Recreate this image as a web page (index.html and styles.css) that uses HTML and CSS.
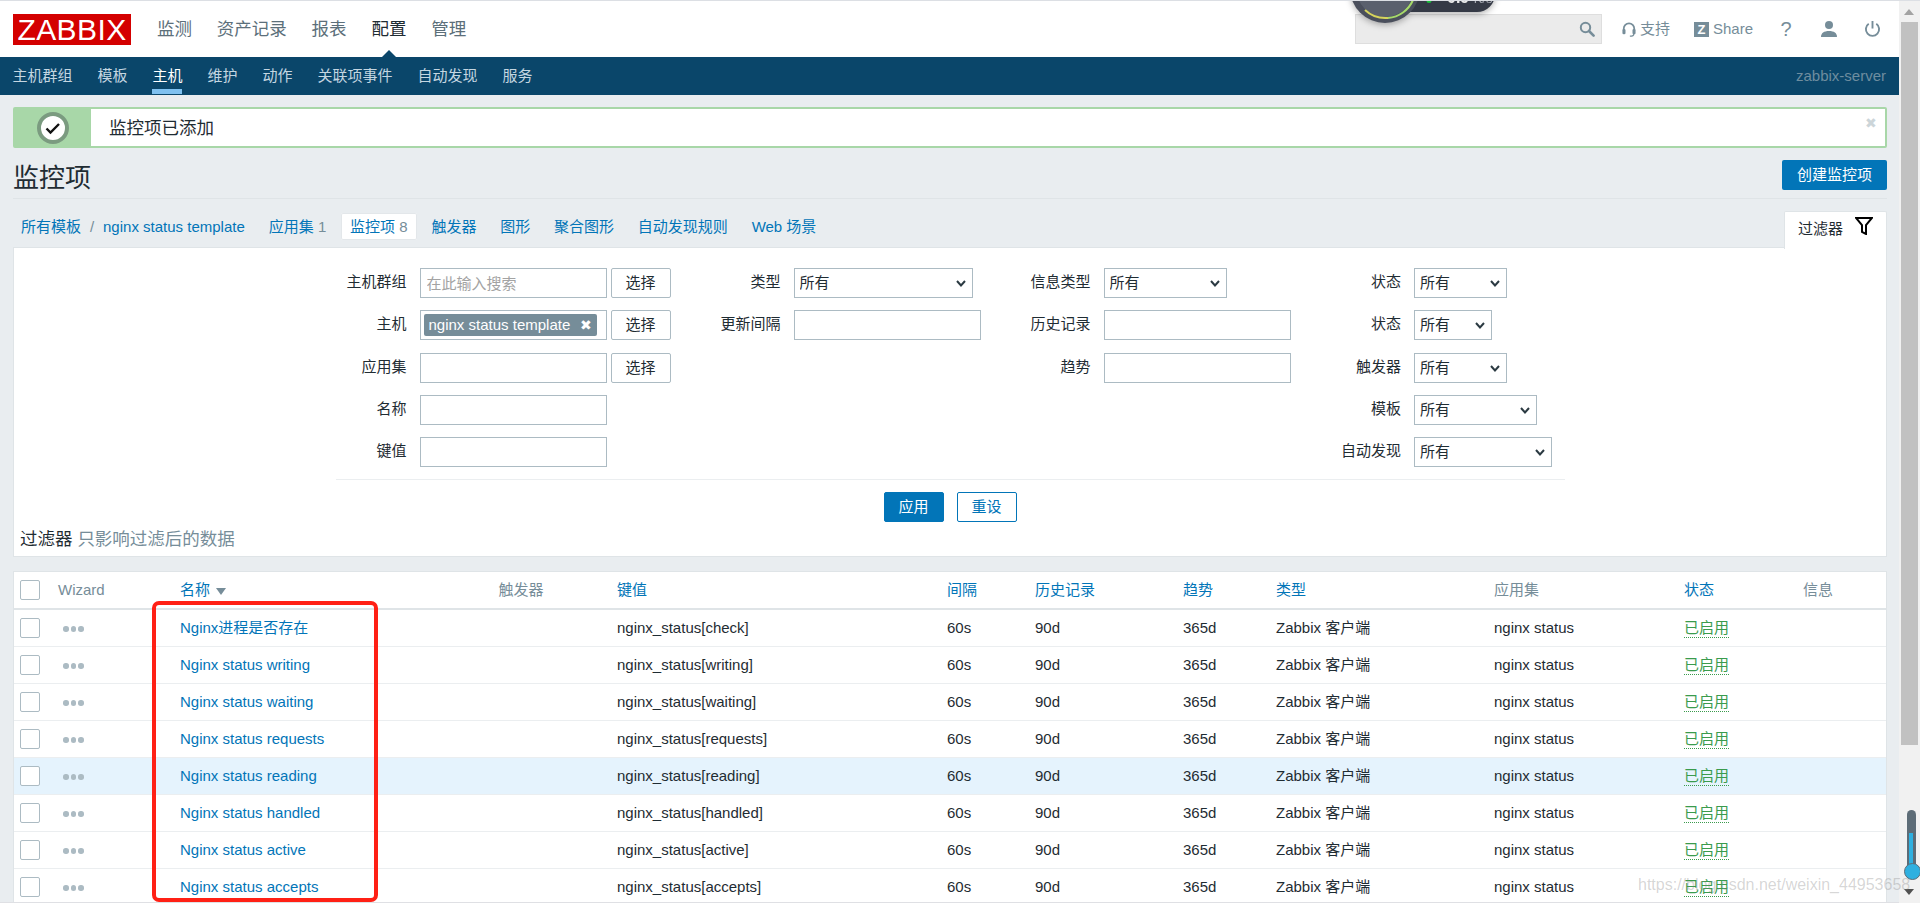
FILE: index.html
```html
<!DOCTYPE html>
<html lang="zh-CN">
<head>
<meta charset="utf-8">
<title>监控项</title>
<link rel="stylesheet" href="styles.css">
</head>
<body>
<div class="page">
  <header class="top">
    <div class="logo">ZABBIX</div>
    <nav class="menu">
      <a>监测</a><a>资产记录</a><a>报表</a><a class="on">配置</a><a>管理</a>
    </nav>
    <div class="search">
      <input class="search-input" type="text" aria-label="搜索">
      <svg class="search-icon" viewBox="0 0 16 16" width="16" height="16"><circle cx="6.5" cy="6.5" r="4.7" fill="none" stroke="#768d99" stroke-width="2"/><path d="M10 10l4.6 4.6" stroke="#768d99" stroke-width="2.6" stroke-linecap="round"/></svg>
    </div>
    <a class="tool support"><svg viewBox="0 0 16 18" width="14" height="17"><path d="M2 10V8a6 6 0 0 1 12 0v2" fill="none" stroke="#768d99" stroke-width="2"/><rect x="0.5" y="8.500" width="3.500" height="6" rx="1.500" fill="#768d99"/><rect x="12" y="8.500" width="3.500" height="6" rx="1.500" fill="#768d99"/><path d="M13.500 14c0 2-2 2.500-4.500 2.500" fill="none" stroke="#768d99" stroke-width="1.500"/></svg>支持</a>
    <a class="tool share"><span class="zbox">Z</span>Share</a>
    <a class="ico help">?</a>
    <a class="ico"><svg viewBox="0 0 18 18" width="18" height="18"><circle cx="9" cy="5" r="4" fill="#768d99"/><path d="M1 17c0-4 3-6 8-6s8 2 8 6z" fill="#768d99"/></svg></a>
    <a class="ico"><svg viewBox="0 0 18 18" width="17" height="18"><path d="M5 3.500a7 7 0 1 0 8 0" fill="none" stroke="#768d99" stroke-width="2"/><path d="M9 0.500v8" stroke="#768d99" stroke-width="2"/></svg></a>
  </header>
  <nav class="sub">
    <a>主机群组</a><a>模板</a><a class="on">主机</a><a>维护</a><a>动作</a><a>关联项事件</a><a>自动发现</a><a>服务</a>
    <span class="server">zabbix-server</span>
  </nav>
  <main class="content">
    <div class="message">
      <div class="message-icon">
        <svg viewBox="0 0 32 32" width="32" height="32"><circle cx="16" cy="16" r="14" fill="#fff" stroke="#7b9b80" stroke-width="4"/><path d="M9.500 16.500l4 4 8.500-8.500" fill="none" stroke="#111" stroke-width="2.400"/></svg>
      </div>
      <div class="message-text">监控项已添加</div>
      <span class="message-close">✖</span>
    </div>
    <div class="title-row">
      <h1 class="title">监控项</h1>
      <a class="btn-create">创建监控项</a>
    </div>
    <div class="tabs-row">
      <div class="crumbs"><a>所有模板</a><span class="slash">/</span><a>nginx status template</a></div>
      <a class="tab">应用集 <span class="count">1</span></a>
      <a class="tab active">监控项 <span class="count">8</span></a>
      <a class="tab">触发器</a>
      <a class="tab">图形</a>
      <a class="tab">聚合图形</a>
      <a class="tab">自动发现规则</a>
      <a class="tab">Web 场景</a>
      <div class="filter-tab">过滤器
        <svg viewBox="0 0 18 18" width="18" height="18"><path d="M1 1h16l-6 7v9l-4-2V8z" fill="#fff" stroke="#000" stroke-width="2"/></svg>
      </div>
    </div>
    <section class="filter">
      <form class="form">
        <div class="col col1">
          <label>主机群组</label><div class="pick"><input class="input" placeholder="在此输入搜索"><button type="button" class="choose">选择</button></div>
          <label>主机</label><div class="pick"><div class="input chipbox"><span class="chip">nginx status template<b class="chip-x">✖</b></span></div><button type="button" class="choose">选择</button></div>
          <label>应用集</label><div class="pick"><input class="input"><button type="button" class="choose">选择</button></div>
          <label>名称</label><div class="pick"><input class="input"></div>
          <label>键值</label><div class="pick"><input class="input"></div>
        </div>
        <div class="col col2">
          <label>类型</label><div class="selwrap w179"><select class="sel"><option>所有</option></select><svg class="chev" viewBox="0 0 10 7" width="10" height="7"><path d="M1 1l4 4.500L9 1" fill="none" stroke="#2b3a42" stroke-width="2"/></svg></div>
          <label>更新间隔</label><div><input class="input"></div>
        </div>
        <div class="col col3">
          <label>信息类型</label><div class="selwrap w123"><select class="sel"><option>所有</option></select><svg class="chev" viewBox="0 0 10 7" width="10" height="7"><path d="M1 1l4 4.500L9 1" fill="none" stroke="#2b3a42" stroke-width="2"/></svg></div>
          <label>历史记录</label><div><input class="input"></div>
          <label>趋势</label><div><input class="input"></div>
        </div>
        <div class="col col4">
          <label>状态</label><div class="selwrap w93"><select class="sel"><option>所有</option></select><svg class="chev" viewBox="0 0 10 7" width="10" height="7"><path d="M1 1l4 4.500L9 1" fill="none" stroke="#2b3a42" stroke-width="2"/></svg></div>
          <label>状态</label><div class="selwrap w78"><select class="sel"><option>所有</option></select><svg class="chev" viewBox="0 0 10 7" width="10" height="7"><path d="M1 1l4 4.500L9 1" fill="none" stroke="#2b3a42" stroke-width="2"/></svg></div>
          <label>触发器</label><div class="selwrap w93"><select class="sel"><option>所有</option></select><svg class="chev" viewBox="0 0 10 7" width="10" height="7"><path d="M1 1l4 4.500L9 1" fill="none" stroke="#2b3a42" stroke-width="2"/></svg></div>
          <label>模板</label><div class="selwrap w123"><select class="sel"><option>所有</option></select><svg class="chev" viewBox="0 0 10 7" width="10" height="7"><path d="M1 1l4 4.500L9 1" fill="none" stroke="#2b3a42" stroke-width="2"/></svg></div>
          <label>自动发现</label><div class="selwrap w138"><select class="sel"><option>所有</option></select><svg class="chev" viewBox="0 0 10 7" width="10" height="7"><path d="M1 1l4 4.500L9 1" fill="none" stroke="#2b3a42" stroke-width="2"/></svg></div>
        </div>
      </form>
      <div class="actions">
        <button type="button" class="apply">应用</button>
        <button type="button" class="reset">重设</button>
      </div>
      <div class="filter-note">过滤器 <span>只影响过滤后的数据</span></div>
    </section>
    <section class="list">
      <table class="grid">
        <colgroup>
          <col class="c-check"><col class="c-wizard"><col class="c-name"><col class="c-trigger"><col class="c-key"><col class="c-interval"><col class="c-history"><col class="c-trends"><col class="c-type"><col class="c-app"><col class="c-status"><col class="c-info">
        </colgroup>
        <thead>
          <tr>
            <th><span class="box"></span></th>
            <th>Wizard</th>
            <th><a>名称</a><i class="sort"></i></th>
            <th>触发器</th>
            <th><a>键值</a></th>
            <th><a>间隔</a></th>
            <th><a>历史记录</a></th>
            <th><a>趋势</a></th>
            <th><a>类型</a></th>
            <th>应用集</th>
            <th><a>状态</a></th>
            <th>信息</th>
          </tr>
        </thead>
        <tbody>
          <tr><td><span class="box"></span></td><td><span class="dots"><i></i><i></i><i></i></span></td><td><a>Nginx进程是否存在</a></td><td></td><td>nginx_status[check]</td><td>60s</td><td>90d</td><td>365d</td><td>Zabbix 客户端</td><td>nginx status</td><td><span class="ok">已启用</span></td><td></td></tr>
          <tr><td><span class="box"></span></td><td><span class="dots"><i></i><i></i><i></i></span></td><td><a>Nginx status writing</a></td><td></td><td>nginx_status[writing]</td><td>60s</td><td>90d</td><td>365d</td><td>Zabbix 客户端</td><td>nginx status</td><td><span class="ok">已启用</span></td><td></td></tr>
          <tr><td><span class="box"></span></td><td><span class="dots"><i></i><i></i><i></i></span></td><td><a>Nginx status waiting</a></td><td></td><td>nginx_status[waiting]</td><td>60s</td><td>90d</td><td>365d</td><td>Zabbix 客户端</td><td>nginx status</td><td><span class="ok">已启用</span></td><td></td></tr>
          <tr><td><span class="box"></span></td><td><span class="dots"><i></i><i></i><i></i></span></td><td><a>Nginx status requests</a></td><td></td><td>nginx_status[requests]</td><td>60s</td><td>90d</td><td>365d</td><td>Zabbix 客户端</td><td>nginx status</td><td><span class="ok">已启用</span></td><td></td></tr>
          <tr class="hover"><td><span class="box"></span></td><td><span class="dots"><i></i><i></i><i></i></span></td><td><a>Nginx status reading</a></td><td></td><td>nginx_status[reading]</td><td>60s</td><td>90d</td><td>365d</td><td>Zabbix 客户端</td><td>nginx status</td><td><span class="ok">已启用</span></td><td></td></tr>
          <tr><td><span class="box"></span></td><td><span class="dots"><i></i><i></i><i></i></span></td><td><a>Nginx status handled</a></td><td></td><td>nginx_status[handled]</td><td>60s</td><td>90d</td><td>365d</td><td>Zabbix 客户端</td><td>nginx status</td><td><span class="ok">已启用</span></td><td></td></tr>
          <tr><td><span class="box"></span></td><td><span class="dots"><i></i><i></i><i></i></span></td><td><a>Nginx status active</a></td><td></td><td>nginx_status[active]</td><td>60s</td><td>90d</td><td>365d</td><td>Zabbix 客户端</td><td>nginx status</td><td><span class="ok">已启用</span></td><td></td></tr>
          <tr><td><span class="box"></span></td><td><span class="dots"><i></i><i></i><i></i></span></td><td><a>Nginx status accepts</a></td><td></td><td>nginx_status[accepts]</td><td>60s</td><td>90d</td><td>365d</td><td>Zabbix 客户端</td><td>nginx status</td><td><span class="ok">已启用</span></td><td></td></tr>
        </tbody>
      </table>
    </section>
  </main>

  <div class="gauge">
    <svg viewBox="0 0 150 60" width="150" height="60"><rect x="30" y="-30" width="115" height="42" rx="18" fill="#353a46"/><circle cx="35" cy="-12" r="35" fill="#4a4f5c"/><circle cx="35" cy="-12" r="29" fill="#5a606d"/><path d="M15 10A30 30 0 0 0 38 18" fill="none" stroke="#d6d45c" stroke-width="2"/><path d="M38 18A30 30 0 0 0 63 0" fill="none" stroke="#a6d96a" stroke-width="2"/><circle cx="79" cy="0.500" r="2.500" fill="#19c23c"/></svg>
    <span class="gauge-text">0.9 <small>K/s</small></span>
  </div>
  <div class="redbox"></div>
  <div class="bottom-line"></div>
</div>
<aside class="scrollbar">
  <span class="arrow up"></span>
  <span class="thumb"></span>
  <span class="thermo"><i></i></span>
  <span class="arrow down"></span>
</aside>
<div class="watermark">https://blog.csdn.net/weixin_44953658</div>
</body>
</html>
```
FILE: styles.css
```css
* { box-sizing: border-box; }
html, body { margin: 0; height: 903px; overflow: hidden; }
body {
  display: flex;
  position: relative;
  font: 15px/20px "Liberation Sans", "Noto Sans CJK SC", sans-serif;
  color: #1f2c33;
  background: #e9edf0;
  border-top: 1px solid #dcdfe4;
}
a { color: #0275b8; text-decoration: none; }
.page { position: relative; width: 1899px; height: 902px; overflow: hidden; flex: none; }

/* header */
.top { display: flex; align-items: center; height: 56px; background: #fff; padding: 0 5.5px 0 13px; }
.logo {
  width: 118px; height: 31px; background: #d40000; color: #fff;
  font-size: 30px; line-height: 31px; text-align: center; letter-spacing: .4px;
}
.menu { display: flex; gap: 24.8px; margin-left: 26px; font-size: 17.500px; line-height: 24px; position: relative; }
.menu a { color: #5c6f7a; position: relative; }
.menu a.on { color: #1f2c33; }
.menu a.on::after {
  content: ""; position: absolute; left: 8px; top: 33px;
  border: solid transparent; border-width: 0 10px 10px; border-bottom-color: #0a466a;
}
.search { display: flex; align-items: center; width: 247px; height: 30px; margin-left: auto; background: #ebebeb; border: 1px solid #dedede; padding-right: 6px; }
.search-input { flex: 1; min-width: 0; height: 100%; border: 0; background: transparent; }
.tool { display: flex; align-items: center; color: #768d99; gap: 4px; }
.support { margin-left: 19.500px; }
.share { margin-left: 24px; margin-right: 11.500px; }
.zbox { width: 15px; height: 15px; background: #768d99; color: #fff; font-size: 13px; font-weight: 700; line-height: 15px; text-align: center; }
.ico { width: 43px; display: flex; justify-content: center; align-items: center; color: #768d99; }
.help { font-size: 20px; }

/* sub nav */
.sub { display: flex; align-items: center; gap: 25px; height: 38px; background: #0a466a; padding: 0 13px 0 12.400px; position: relative; }
.sub a { color: #c4d6e1; position: relative; line-height: 38px; }
.sub a.on { color: #fff; }
.sub a.on::after { content: ""; position: absolute; left: 0; right: 0; bottom: 1px; height: 5px; background: #7fc1f0; }
.server { margin-left: auto; color: #6e8d9f; }

/* content */
.content { padding: 12px 12px 0 13px; }
.message { display: flex; align-items: center; height: 41px; background: #fff; border: 2px solid #a8d7a8; border-radius: 2px; position: relative; }
.message-icon { display: flex; align-items: center; justify-content: center; align-self: stretch; width: 76px; background: #a8d7a8; }
.message-text { margin-left: 18px; font-size: 17.500px; }
.message-close { position: absolute; right: 8px; top: 4px; font-size: 14px; color: #ccd5d9; }
.title-row { display: flex; justify-content: space-between; align-items: flex-start; margin-top: 12px; padding-bottom: 8px; border-bottom: 1px solid #dfe4e7; box-sizing: content-box; height: 30px; }
.title { margin: 0; font-size: 26px; font-weight: 400; line-height: 36px; height: 30px; }
.btn-create { width: 105px; height: 30px; background: #0275b8; color: #fff; border-radius: 2px; line-height: 30px; text-align: center; }

.tabs-row { display: flex; align-items: flex-start; gap: 5.800px; height: 49px; padding-top: 14px; }
.crumbs { display: flex; padding: 4px 0 0 8px; margin-right: 9.200px; line-height: 20px; }
.slash { width: 22px; text-align: center; color: #768d99; }
.tab { height: 27px; padding: 0 9px; line-height: 27px; }
.tab.active { background: #fff; border-radius: 2px; box-shadow: 0 0 0 1px #e3e7ea inset; }
.count { color: #768d99; }
.filter-tab {
  display: flex; align-items: flex-start; gap: 12px; margin-left: auto; margin-top: -2px;
  width: 103px; height: 38px; padding: 7px 0 0 13px;
  background: #fff; border: 1px solid #dfe4e7; border-bottom: 0; border-radius: 2px 2px 0 0;
  position: relative; z-index: 1; color: #1f2c33;
}
.filter-tab svg { margin-top: -2px; }

/* filter */
.filter { height: 310px; background: #fff; border: 1px solid #dfe4e7; padding-top: 20px; margin-top: -1px; }
.form { display: flex; width: 1229px; margin: 0 auto; height: 199px; }
.col { display: grid; grid-auto-rows: 30px; row-gap: 12.25px; column-gap: 13px; align-content: start; }
.col label { text-align: right; line-height: 28px; white-space: nowrap; }
.col1 { width: 334.500px; grid-template-columns: 71px 1fr; }
.col2 { width: 329.500px; grid-template-columns: 110.500px 1fr; }
.col3 { width: 300px; grid-template-columns: 91px 1fr; }
.col4 { width: 264px; grid-template-columns: 101.500px 1fr; }
.pick { display: flex; gap: 4px; }
.input { width: 187px; height: 30px; border: 1px solid #acbbc3; background: #fff; padding: 0 6px; font: inherit; flex: none; }
.input::placeholder { color: #a3a3a3; }
.chipbox { padding: 0 0 0 3px; display: flex; align-items: center; }
.chip { display: flex; align-items: center; justify-content: space-between; width: 173px; height: 22px; padding: 0 5px; background: #768d99; color: #fff; border-radius: 2px; }
.chip-x { font-size: 14px; font-weight: 400; }
.choose { width: 60px; height: 30px; padding: 0; font: inherit; color: #1f2c33; background: #fff; border: 1px solid #acbbc3; border-radius: 2px; }
.selwrap { position: relative; height: 30px; }
.sel { display: block; width: 100%; height: 30px; border: 1px solid #acbbc3; background: #fff; font: inherit; color: #1f2c33; padding-left: 5px; border-radius: 0; appearance: none; }
.chev { position: absolute; right: 7px; top: 12px; pointer-events: none; }
.w179 { width: 179px; }
.w123 { width: 123px; }
.w93 { width: 93px; }
.w78 { width: 78px; }
.w138 { width: 138px; }
.actions { display: flex; justify-content: center; gap: 13px; width: 1229px; margin: 12px auto 0; padding-top: 12px; border-top: 1px solid #ebeef0; }
.apply, .reset { width: 60px; height: 30px; padding: 0; font: inherit; border-radius: 2px; border: 1px solid #0275b8; }
.apply { background: #0275b8; color: #fff; }
.reset { background: #fff; color: #0275b8; }
.filter-note { margin: 7px 0 0 6px; font-size: 17.500px; line-height: 20px; }
.filter-note span { color: #768d99; }

/* list */
.list { margin-top: 14px; background: #fff; border: 1px solid #dfe4e7; border-bottom: 0; }
.grid { width: 1872px; table-layout: fixed; border-collapse: separate; border-spacing: 0; }
.c-check { width: 44px; } .c-wizard { width: 122px; } .c-name { width: 318.500px; } .c-trigger { width: 118.500px; }
.c-key { width: 330px; } .c-interval { width: 88px; } .c-history { width: 148px; } .c-trends { width: 93px; }
.c-type { width: 218px; } .c-app { width: 190px; } .c-status { width: 119px; } .c-info { width: 83px; }
.grid th { height: 38px; padding: 0 0 1px; text-align: left; font-weight: 400; color: #768d99; border-bottom: 2px solid #dfe4e7; }
.grid td { height: 37px; padding: 0; border-bottom: 1px solid #ebeef0; }
.grid th:first-child, .grid td:first-child { padding-left: 6px; }
.hover td { background: #e5f3fd; }
.box { display: block; width: 20px; height: 20px; background: #fff; border: 1px solid #acbbc3; border-radius: 2px; }
.sort { display: inline-block; margin-left: 6px; border: solid transparent; border-width: 7px 5px 0; border-top-color: #768d99; vertical-align: 0; }
.dots { display: flex; gap: 2px; margin-left: 5px; margin-top: 2px; }
.dots i { width: 5.500px; height: 5.500px; background: #acbbc3; border-radius: 50%; }
.ok { color: #3a9b4d; border-bottom: 1px dotted #3a9b4d; display: inline-block; line-height: 19px; }

/* overlays */
.gauge { position: absolute; left: 1350px; top: -1px; width: 150px; height: 60px; filter: drop-shadow(0 2px 3px rgba(0, 0, 0, .3)); }
.gauge svg { display: block; overflow: visible; }
.gauge-text { position: absolute; left: 97px; top: -12px; color: #e8e8e8; font-size: 16px; font-weight: 700; }
.gauge-text small { font-size: 13px; font-weight: 400; color: #a7abb3; }
.redbox { position: absolute; left: 152px; top: 600px; width: 226px; height: 301px; border: 4px solid #ff2015; border-radius: 7px; }
.watermark { position: absolute; left: 1638px; top: 874px; font-size: 16px; white-space: nowrap; color: rgba(130, 130, 130, .33); z-index: 2; }
.bottom-line { position: absolute; left: 0; right: 0; bottom: 0; height: 1px; background: #dfe0e4; }

/* scrollbar */
.scrollbar { position: relative; width: 21px; flex: none; height: 902px; background: #f1f1f1; }
.thumb { position: absolute; left: 2px; top: 21px; width: 17px; height: 723px; background: #c1c1c1; }
.arrow { position: absolute; left: 5px; border: solid transparent; }
.arrow.up { top: 8px; border-width: 0 5px 6px; border-bottom-color: #a3a3a3; }
.arrow.down { top: 888px; border-width: 6px 5px 0; border-top-color: #505050; }
.thermo { position: absolute; left: 8px; top: 809px; width: 9px; height: 56px; background: #5d6c77; border-radius: 5px 5px 0 0; }
.thermo i { position: absolute; left: 2px; top: 23px; width: 4px; height: 33px; background: #2fb0e0; }
.thermo::after { content: ""; position: absolute; left: -3px; top: 53px; width: 15px; height: 15px; border-radius: 50%; background: #2fb0e0; border: 1px solid #5d6c77; }
```
